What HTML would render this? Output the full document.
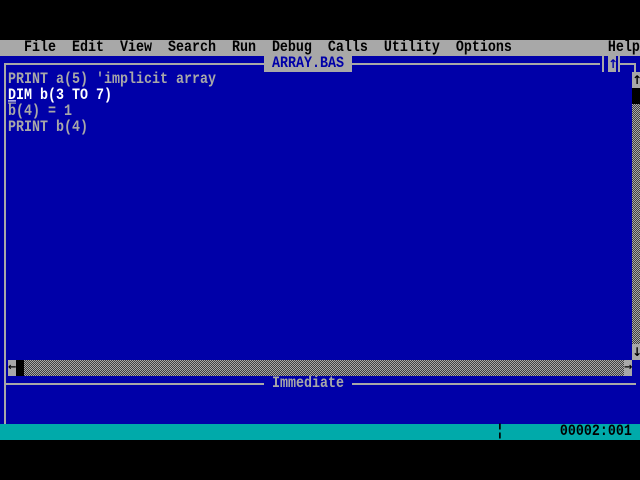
<!DOCTYPE html>
<html><head><meta charset="utf-8"><style>
*{margin:0;padding:0;box-sizing:border-box}
body{width:640px;height:480px;background:#000;position:relative;overflow:hidden;font-family:"Liberation Mono","DejaVu Sans Mono",monospace;font-size:13.33px;line-height:16px;font-weight:bold}
.a{position:absolute;white-space:pre}
.t{display:inline-block;transform:scaleY(1.15);transform-origin:50% 55%;position:relative;top:1px}
.ln{position:absolute;background:#a8a8a8}
.dither{background-color:#a8a8a8;background-image:repeating-conic-gradient(#404040 0 25%,transparent 0 50%);background-size:2px 2px}
.ar{text-align:center;font-family:"DejaVu Sans",sans-serif;font-weight:bold;font-size:12px}
</style></head><body>
<div class="a" style="left:0;top:40px;width:640px;height:16px;background:#a8a8a8;color:#000"><span class="t">   File  Edit  View  Search  Run  Debug  Calls  Utility  Options            Help</span></div>
<div class="a" style="left:0;top:56px;width:640px;height:368px;background:#0000a8"></div>
<div class="ln" style="left:4px;top:63px;width:2px;height:361px"></div>
<div class="ln" style="left:4px;top:63px;width:596px;height:2px"></div>
<div class="ln" style="left:620px;top:63px;width:16px;height:2px"></div>
<div class="ln" style="left:634px;top:63px;width:2px;height:9px"></div>
<div class="ln" style="left:602px;top:56px;width:2px;height:16px"></div>
<div class="ln" style="left:618px;top:56px;width:2px;height:16px"></div>
<div class="a ar" style="left:608px;top:56px;width:8px;height:16px;background:#a8a8a8;color:#0000a8">↑</div>
<div class="a" style="left:264px;top:56px;width:88px;height:16px;background:#a8a8a8;color:#0000a8"><span class="t"> ARRAY.BAS</span></div>
<div class="a" style="left:8px;top:72px;color:#a8a8a8"><span class="t">PRINT a(5) 'implicit array</span></div>
<div class="a" style="left:8px;top:88px;color:#fff"><span class="t"><u>D</u>IM b(3 TO 7)</span></div>
<div class="a" style="left:8px;top:104px;color:#a8a8a8"><span class="t"><span style="text-decoration:overline">b</span>(4) = 1</span></div>
<div class="a" style="left:8px;top:120px;color:#a8a8a8"><span class="t">PRINT b(4)</span></div>
<div class="a dither" style="left:632px;top:72px;width:8px;height:288px"></div>
<div class="a ar" style="left:632px;top:72px;width:8px;height:16px;background:#a8a8a8;color:#000">↑</div>
<div class="a" style="left:632px;top:88px;width:8px;height:16px;background:#000"></div>
<div class="a ar" style="left:632px;top:344px;width:8px;height:16px;background:#a8a8a8;color:#000">↓</div>
<div class="a dither" style="left:8px;top:360px;width:624px;height:16px"></div>
<div class="a ar" style="left:8px;top:360px;width:8px;height:16px;background:#a8a8a8;color:#000;font-size:10px">←</div>
<div class="a" style="left:16px;top:360px;width:8px;height:16px;background:#000"></div>
<div class="a ar" style="left:624px;top:360px;width:8px;height:16px;background:#a8a8a8;color:#000;font-size:10px">→</div>
<div class="ln" style="left:4px;top:383px;width:632px;height:2px"></div>
<div class="a" style="left:264px;top:376px;width:88px;height:16px;background:#0000a8;color:#a8a8a8"><span class="t"> Immediate</span></div>
<div class="a" style="left:0;top:424px;width:640px;height:16px;background:#00aaaa;color:#000"><span class="t">                                                              ¦       00002:001</span></div>
</body></html>
